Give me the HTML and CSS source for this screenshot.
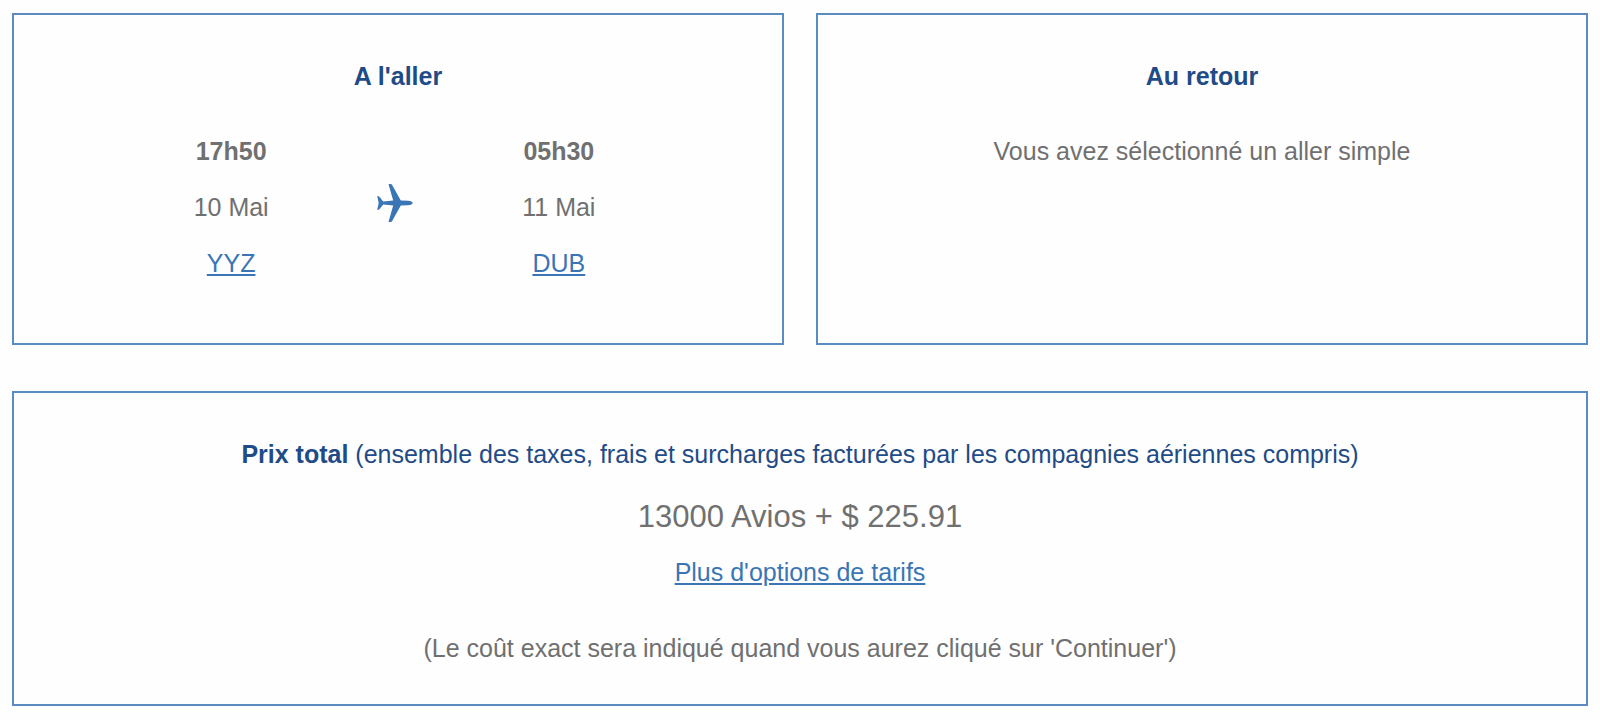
FILE: index.html
```html
<!DOCTYPE html>
<html lang="fr">
<head>
    <meta charset="UTF-8">
    <meta name="viewport" content="width=device-width, initial-scale=1.0">
    <title>Votre vol</title>
    <link rel="stylesheet" href="styles.css">
</head>
<body>
    <main class="summary">
        <div class="journeys">
            <section class="box">
                <h2>A l'aller</h2>
                <div class="flight">
                    <div class="stop">
                        <strong>17h50</strong>
                        <span>10 Mai</span>
                        <a href="#">YYZ</a>
                    </div>
                    <svg class="plane" viewBox="0 0 36 38" aria-hidden="true">
                        <path d="M11.6 .6Q11.7 0 12.5 0H13.6Q14.6 0 15 .8L23.8 16.6L31 16.8C33.8 17 35.7 17.8 35.7 19S33.8 21 31 21.2L23.8 21.4L15 37.2Q14.6 38 13.6 38H12.5Q11.7 38 11.6 37.4L16.2 21.4L6.2 20.6L2.6 25Q1.2 26.4 .4 26V25L1.7 19L.4 13V12Q1.2 11.6 2.6 13L6.2 17.4L16.2 16.6Z"/>
                    </svg>
                    <div class="stop">
                        <strong>05h30</strong>
                        <span>11 Mai</span>
                        <a href="#">DUB</a>
                    </div>
                </div>
            </section>

            <section class="box">
                <h2>Au retour</h2>
                <p>Vous avez sélectionné un aller simple</p>
            </section>
        </div>

        <section class="box price-box">
            <h2>Prix total <span>(ensemble des taxes, frais et surcharges facturées par les compagnies aériennes compris)</span></h2>
            <p class="price">13000 Avios + $ 225.91</p>
            <a href="#">Plus d'options de tarifs</a>
            <p class="note">(Le coût exact sera indiqué quand vous aurez cliqué sur 'Continuer')</p>
        </section>
    </main>
</body>
</html>
```

FILE: styles.css
```css
/* General Styles */
body {
    font-family: "Liberation Sans", Arial, sans-serif;
    font-size: 25px;
    line-height: 28px;
    margin: 0;
    background: #fefefe;
    color: #707070;
}

h2,
p {
    margin: 0;
    font-size: inherit;
}

h2 {
    color: #1f4b87;
}

h2 span {
    font-weight: normal;
}

a {
    color: #3a75b5;
    text-decoration-thickness: 2px;
    text-underline-offset: 2px;
}

.summary {
    display: flex;
    flex-direction: column;
    gap: 46px;
    padding: 13px 12px;
}

.journeys {
    display: grid;
    grid-template-columns: 1fr 1fr;
    gap: 32px;
}

.box {
    display: flex;
    flex-direction: column;
    align-items: center;
    gap: 47px;
    padding: 47px 0 66px;
    border: 2px solid #5b8cc0;
    text-align: center;
}

/* Outbound flight */
.flight {
    display: grid;
    grid-template-columns: 1fr 1fr 1fr;
    align-items: center;
    justify-items: center;
    width: 64%;
    padding-right: 6px;
}

.stop {
    display: flex;
    flex-direction: column;
    align-items: center;
    gap: 28px;
}

.plane {
    width: 36px;
    height: 38px;
    margin-bottom: 8px;
    fill: #3a75b5;
}

/* Total price */
.price-box {
    gap: 24px;
    padding-bottom: 42px;
}

.price {
    margin-top: 8px;
    font-size: 31px;
    line-height: 34px;
}

.note {
    margin-top: 24px;
}
```
